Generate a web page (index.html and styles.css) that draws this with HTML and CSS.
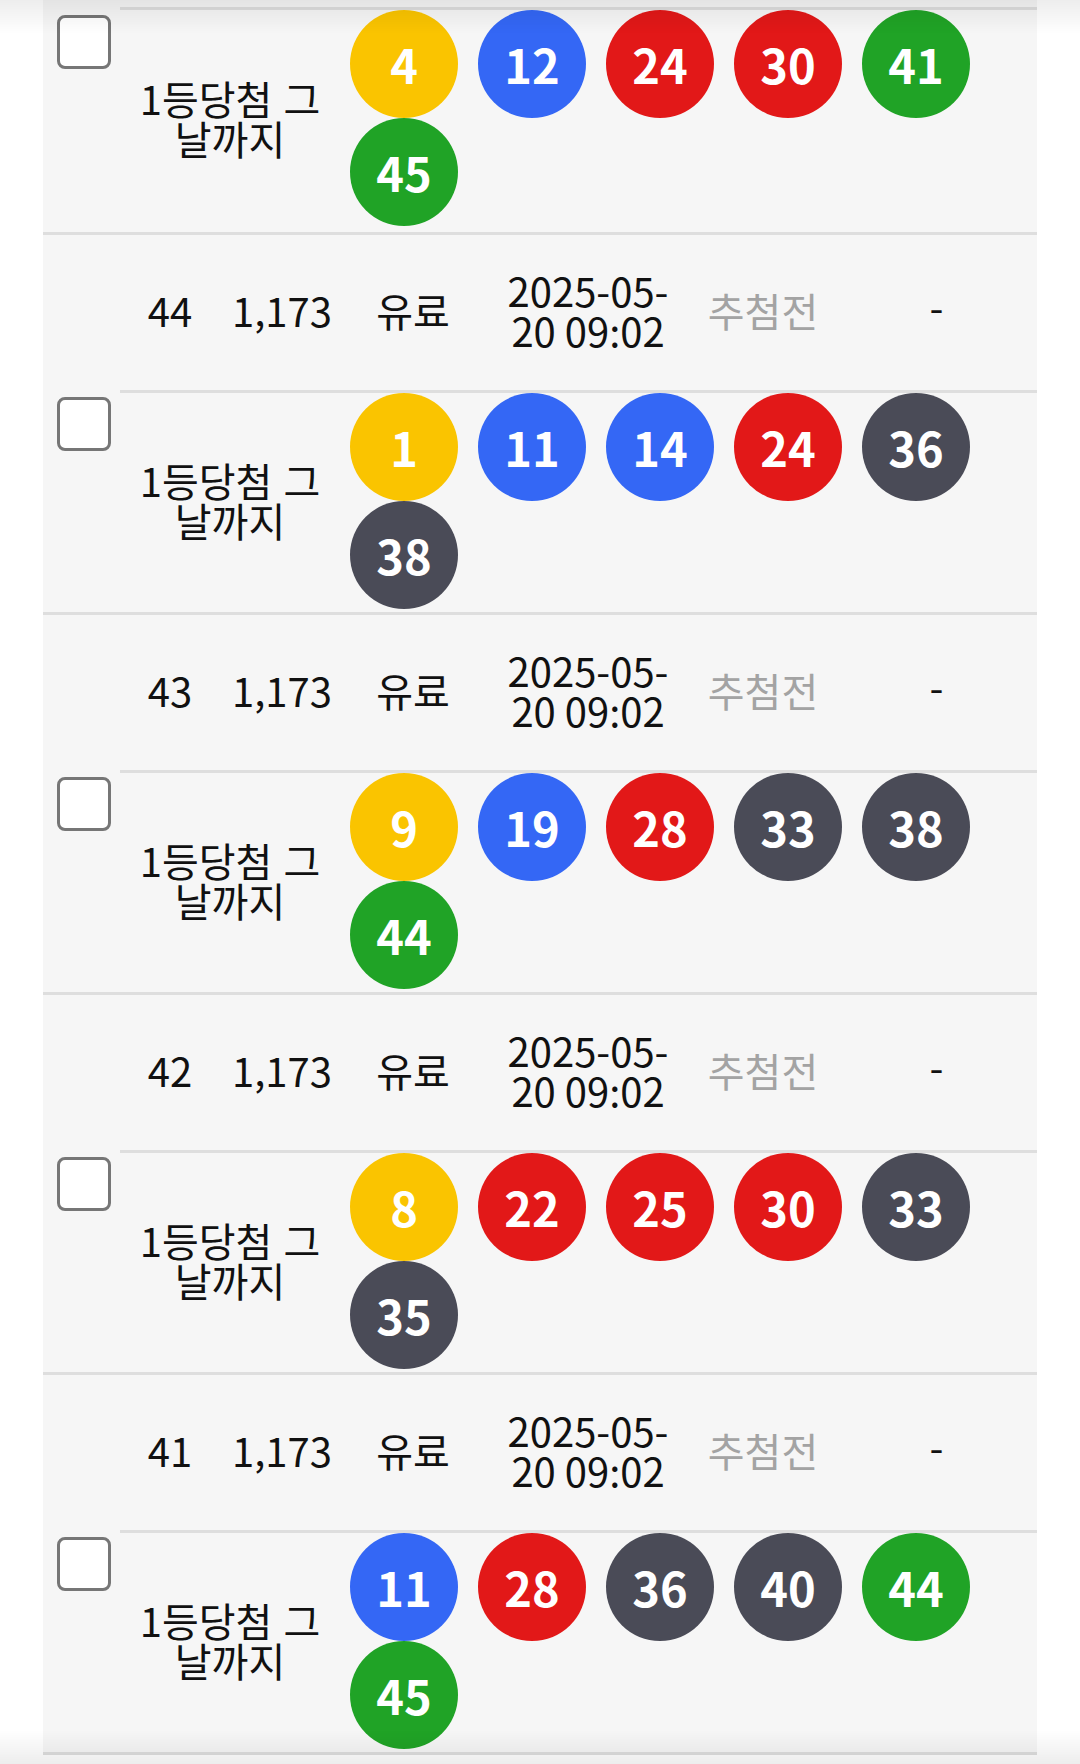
FILE: index.html
```html
<!DOCTYPE html>
<html lang="ko">
<head>
<meta charset="utf-8">
<title>구매내역</title>
<link rel="stylesheet" href="styles.css">
</head>
<body>
<div class="shade-top"></div>
<div class="panel">
  <table class="lotto">
    <colgroup>
      <col class="c-check"><col class="c-no"><col class="c-count"><col class="c-type"><col class="c-date"><col class="c-status"><col class="c-prize">
    </colgroup>
    <tbody>
      <tr class="balls-row first">
        <td class="check check-top"><input type="checkbox" class="box"></td>
        <td class="cond" colspan="2">1등당첨 그 날까지</td>
        <td class="balls" colspan="4"><div class="ball-list"><span class="ball y">4</span><span class="ball b">12</span><span class="ball r">24</span><span class="ball r">30</span><span class="ball g">41</span><span class="ball g">45</span></div></td>
      </tr>

      <tr class="info-row">
        <td class="check" rowspan="2"><input type="checkbox" class="box"></td>
        <td>44</td><td>1,173</td><td>유료</td><td class="date">2025-05-<wbr>20 09:02</td><td class="status">추첨전</td><td>-</td>
      </tr>
      <tr class="balls-row">
        <td class="cond" colspan="2">1등당첨 그 날까지</td>
        <td class="balls" colspan="4"><div class="ball-list"><span class="ball y">1</span><span class="ball b">11</span><span class="ball b">14</span><span class="ball r">24</span><span class="ball d">36</span><span class="ball d">38</span></div></td>
      </tr>

      <tr class="info-row">
        <td class="check" rowspan="2"><input type="checkbox" class="box"></td>
        <td>43</td><td>1,173</td><td>유료</td><td class="date">2025-05-<wbr>20 09:02</td><td class="status">추첨전</td><td>-</td>
      </tr>
      <tr class="balls-row">
        <td class="cond" colspan="2">1등당첨 그 날까지</td>
        <td class="balls" colspan="4"><div class="ball-list"><span class="ball y">9</span><span class="ball b">19</span><span class="ball r">28</span><span class="ball d">33</span><span class="ball d">38</span><span class="ball g">44</span></div></td>
      </tr>

      <tr class="info-row">
        <td class="check" rowspan="2"><input type="checkbox" class="box"></td>
        <td>42</td><td>1,173</td><td>유료</td><td class="date">2025-05-<wbr>20 09:02</td><td class="status">추첨전</td><td>-</td>
      </tr>
      <tr class="balls-row">
        <td class="cond" colspan="2">1등당첨 그 날까지</td>
        <td class="balls" colspan="4"><div class="ball-list"><span class="ball y">8</span><span class="ball r">22</span><span class="ball r">25</span><span class="ball r">30</span><span class="ball d">33</span><span class="ball d">35</span></div></td>
      </tr>

      <tr class="info-row">
        <td class="check" rowspan="2"><input type="checkbox" class="box"></td>
        <td>41</td><td>1,173</td><td>유료</td><td class="date">2025-05-<wbr>20 09:02</td><td class="status">추첨전</td><td>-</td>
      </tr>
      <tr class="balls-row">
        <td class="cond" colspan="2">1등당첨 그 날까지</td>
        <td class="balls" colspan="4"><div class="ball-list"><span class="ball b">11</span><span class="ball r">28</span><span class="ball d">36</span><span class="ball d">40</span><span class="ball g">44</span><span class="ball g">45</span></div></td>
      </tr>
    </tbody>
  </table>
</div>
<div class="shade-bottom"></div>
</body>
</html>
```

FILE: styles.css
```css
html, body {
  margin: 0;
  padding: 0;
  background: #ffffff;
}

body {
  font-family: "Noto Sans CJK KR", "Noto Sans", sans-serif;
  color: #111111;
}

.panel {
  margin: 0 43px;
  padding-top: 7px;
  background: #f6f6f6;
}

.lotto {
  width: 100%;
  table-layout: fixed;
  border-collapse: separate;
  border-spacing: 0;
  border-bottom: 3px solid #dedede;
}

.c-check { width: 77px; }
.c-no { width: 100px; }
.c-count { width: 120px; }
.c-type { width: 146px; }
.c-date { width: 204px; }
.c-status { width: 146px; }
.c-prize { width: 201px; }

.lotto td {
  padding: 0 12px 6px;
  font-size: 40px;
  line-height: 40px;
  text-align: center;
  vertical-align: middle;
}

.info-row { height: 158px; }
.balls-row { height: 222px; }
.balls-row.first { height: 225px; }

.info-row td,
.balls-row .cond,
.balls-row .balls {
  border-top: 3px solid #dedede;
}

.lotto td.check {
  padding: 0 0 0 14px;
  text-align: left;
}

.lotto td.check-top {
  vertical-align: top;
  padding-top: 8px;
}

.box {
  appearance: none;
  -webkit-appearance: none;
  display: block;
  box-sizing: border-box;
  width: 54px;
  height: 54px;
  margin: 0;
  border: 3px solid #767676;
  border-radius: 8px;
  background: #ffffff;
}

.lotto td.cond {
  padding: 0 8px 6px;
  line-height: 40px;
  word-break: keep-all;
}

.lotto td.status {
  color: #a3a3a3;
}

.lotto td.balls {
  padding: 0 10px;
  vertical-align: top;
}

.ball-list {
  display: flex;
  flex-wrap: wrap;
  column-gap: 20px;
  row-gap: 0;
}

.ball {
  width: 108px;
  height: 108px;
  border-radius: 50%;
  display: flex;
  align-items: center;
  justify-content: center;
  padding-bottom: 2px;
  box-sizing: border-box;
  color: #ffffff;
  font-weight: 700;
  font-size: 47px;
  line-height: 1;
}

.ball.y { background: #fac400; }
.ball.b { background: #3467f5; }
.ball.r { background: #e21818; }
.ball.d { background: #4a4b57; }
.ball.g { background: #20a326; }

.shade-top {
  position: fixed;
  top: 0;
  left: 0;
  right: 0;
  height: 34px;
  background: linear-gradient(rgba(0, 0, 0, 0.07), rgba(0, 0, 0, 0));
  pointer-events: none;
}

.shade-bottom {
  position: fixed;
  bottom: 0;
  left: 0;
  right: 0;
  height: 34px;
  background: linear-gradient(rgba(0, 0, 0, 0), rgba(0, 0, 0, 0.07));
  pointer-events: none;
}
```
